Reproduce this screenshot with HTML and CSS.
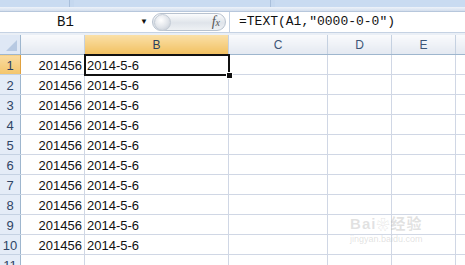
FILE: index.html
```html
<!DOCTYPE html>
<html lang="en">
<head>
    <meta charset="UTF-8">
    <title>Book1 - Sheet1</title>
    <link rel="stylesheet" href="styles.css">
</head>
<body>
    <!-- ribbon bottom edge -->
    <div class="ribbon">
        <div class="group g1"></div>
        <div class="group g2"></div>
        <div class="group g3"></div>
    </div>
    <div class="ribbon-edge"></div>

    <!-- formula bar -->
    <div class="formula-bar">
        <div class="name-box">
            <span class="name">B1</span>
            <span class="arrow">&#9660;</span>
        </div>
        <div class="fx-pill">
            <span class="knob"></span>
            <span class="fx">f<sub>x</sub></span>
        </div>
        <div class="formula">=TEXT(A1,″0000-0-0″)</div>
    </div>
    <div class="bar-gap"></div>

    <!-- sheet -->
    <div class="sheet">
        <table class="grid">
            <thead>
                <tr>
                    <th class="corner"><span class="tri"></span></th>
                    <th class="col"></th>
                    <th class="col sel">B</th>
                    <th class="col">C</th>
                    <th class="col">D</th>
                    <th class="col">E</th>
                    <th class="col"></th>
                </tr>
            </thead>
            <tbody id="rows"></tbody>
        </table>
        <div class="selection"><span class="handle"></span></div>
        <div class="watermark">
            <div class="wm-logo">Bai<span class="paw">❀</span>经验</div>
            <div class="wm-url">jingyan.baidu.com</div>
        </div>
    </div>

    <script>
        const rows = document.getElementById('rows');
        for (let i = 1; i <= 11; i++) {
            const tr = document.createElement('tr');
            const filled = i <= 10;
            tr.innerHTML =
                `<th class="row${i === 1 ? ' sel' : ''}">${i}</th>` +
                `<td class="num">${filled ? '201456' : ''}</td>` +
                `<td>${filled ? '2014-5-6' : ''}</td>` +
                '<td></td><td></td><td></td><td></td>';
            rows.appendChild(tr);
        }
    </script>
</body>
</html>
```

FILE: styles.css
```css
body {
    margin: 0;
    width: 465px;
    height: 265px;
    overflow: hidden;
    background-color: white;
    font-family: "Liberation Sans", Arial, sans-serif;
}
.ribbon {
    display: flex;
    height: 7px;
    background-color: #c5d8ef;
}
.group {
    height: 7px;
    background-color: #c9dbf1;
    border-right: 1px solid #a9bfdb;
}
.g1 { width: 69px; }
.g2 { width: 196px; margin-left: 4px; }
.g3 { flex: 1; margin-left: 4px; border-right: none; }
.ribbon-edge {
    height: 4px;
    background: linear-gradient(#eef3fa, #d3deed);
    border-bottom: 1px solid #b7c7dc;
}
.formula-bar {
    display: flex;
    height: 20px;
    background-color: white;
    border-bottom: 1px solid #c5d2e3;
}
.name-box {
    width: 152px;
    display: flex;
    align-items: center;
    position: relative;
}
.name {
    margin-left: 57px;
    font-family: "Liberation Mono", monospace;
    font-size: 14px;
    color: #111;
}
.arrow {
    position: absolute;
    left: 140px;
    top: 5px;
    font-size: 8px;
    color: #111;
}
.fx-pill {
    width: 74px;
    margin: 1px 0;
    border-radius: 10px;
    background: linear-gradient(#fbfcfd, #dfe4ea 55%, #eef1f4);
    border: 1px solid #b8c2cf;
    display: flex;
    align-items: center;
    justify-content: space-between;
    box-sizing: border-box;
}
.knob {
    width: 15px;
    height: 15px;
    margin-left: 1px;
    border-radius: 50%;
    background: radial-gradient(circle at 40% 35%, #ffffff, #dfe3e9 55%, #bcc4ce);
    border: 1px solid #c4ccd6;
}
.fx {
    margin-right: 5px;
    font-family: "Liberation Serif", serif;
    font-style: italic;
    font-size: 14px;
    color: #555;
}
.fx sub {
    font-size: 10px;
    vertical-align: 0;
}
.formula {
    flex: 1;
    margin-left: 3px;
    padding-left: 9px;
    border-left: 1px solid #c5d2e3;
    font-family: "Liberation Mono", monospace;
    font-size: 13px;
    line-height: 20px;
    color: #111;
}
.bar-gap {
    height: 2px;
    background-color: #eaeff6;
}
.sheet {
    position: relative;
    overflow: hidden;
    height: 230px;
}
.grid {
    border-collapse: collapse;
    table-layout: fixed;
    width: 520px;
}
.grid th, .grid td {
    padding: 0;
    height: 19px;
    border-right: 1px solid #d0d7e5;
    border-bottom: 1px solid #d0d7e5;
    font-weight: normal;
    white-space: nowrap;
    overflow: hidden;
}
.grid th.col {
    background: linear-gradient(#f9fafc, #e4e9f1);
    border-right: 1px solid #c5d1e1;
    border-bottom: 1px solid #9eb6ce;
    color: #3d5677;
    font-size: 12px;
    text-align: center;
}
.grid th.col.sel {
    background: linear-gradient(#fae0a8, #f2c162);
    border-bottom-color: #e0a13f;
    color: #2a3f5e;
}
.corner {
    width: 20px;
    background-color: #dfe8f5;
    border-right: 1px solid #9eb6ce !important;
    border-bottom: 1px solid #9eb6ce !important;
    position: relative;
}
.tri {
    position: absolute;
    right: 3px;
    bottom: 3px;
    width: 0;
    height: 0;
    border-left: 11px solid transparent;
    border-bottom: 11px solid #b7c9e2;
}
.grid thead th:nth-child(2) { width: 63px; }
.grid thead th:nth-child(3) { width: 143px; }
.grid thead th:nth-child(4) { width: 98px; }
.grid thead th:nth-child(5) { width: 63px; }
.grid thead th:nth-child(6) { width: 63px; }
.grid th.row {
    background-color: #e4ecf7;
    border-right: 1px solid #9eb6ce;
    border-bottom: 1px solid #c5d2e3;
    color: #2f4566;
    font-size: 13px;
    text-align: center;
    vertical-align: bottom;
    line-height: 17px;
}
.grid th.row.sel {
    background: linear-gradient(#f9dba0, #f3c56c);
    border-right-color: #e0a13f;
    color: #2a3f5e;
}
.grid td {
    font-size: 13px;
    color: #111;
    padding-left: 2px;
    vertical-align: bottom;
    line-height: 17px;
}
.grid td.num {
    text-align: right;
    padding-right: 2px;
    padding-left: 0;
}
.selection {
    position: absolute;
    left: 84px;
    top: 19px;
    width: 142px;
    height: 18px;
    border: 2px solid #111;
}
.handle {
    position: absolute;
    right: -5px;
    bottom: -5px;
    width: 5px;
    height: 5px;
    background-color: #111;
    border: 1px solid white;
}
.watermark {
    position: absolute;
    left: 350px;
    top: 180px;
    color: rgba(170, 170, 170, 0.35);
    text-align: center;
    font-family: "Liberation Sans", "Noto Sans CJK SC", sans-serif;
}
.wm-logo {
    font-size: 15px;
    font-weight: bold;
    letter-spacing: 1px;
    line-height: 18px;
}
.paw {
    font-size: 13px;
}
.wm-url {
    font-size: 9px;
    line-height: 11px;
}
```
